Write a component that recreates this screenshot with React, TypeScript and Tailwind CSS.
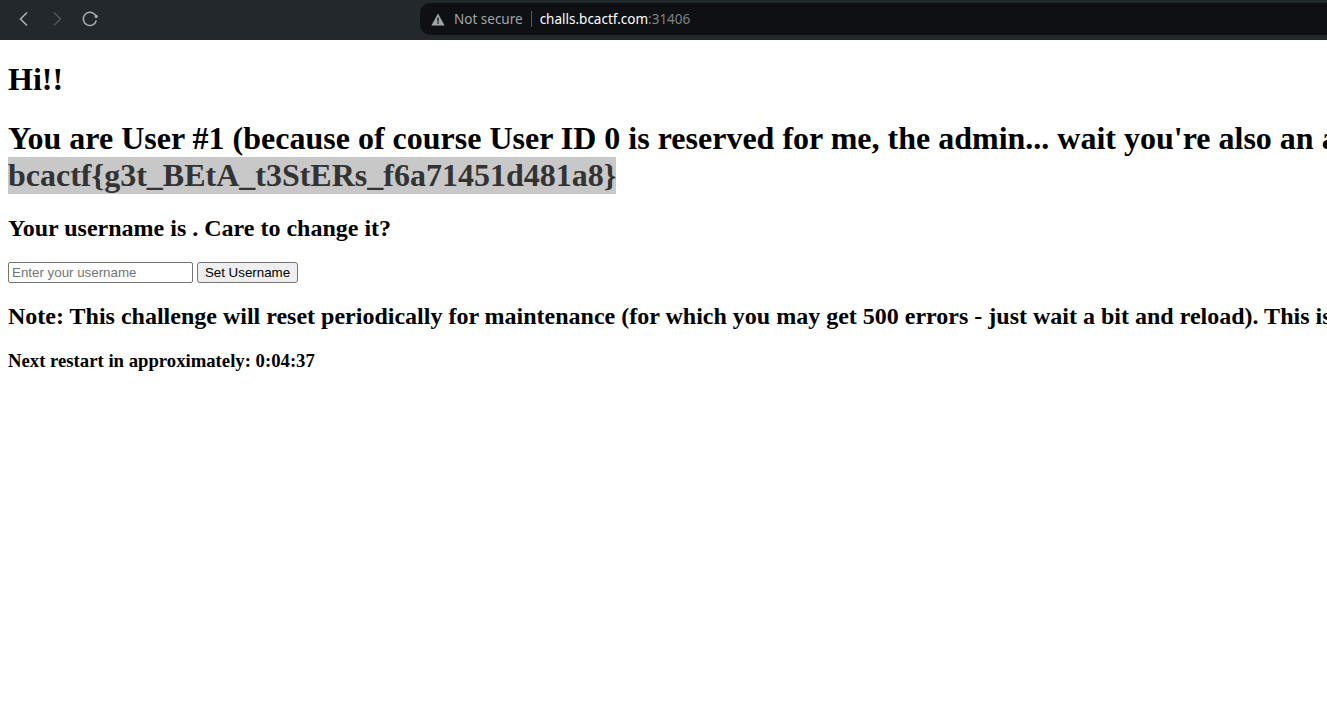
const App = () => {
  return (
    <div className="flex h-[724px] w-[1327px] flex-col overflow-hidden bg-white text-black [font-family:'Liberation_Serif',serif]">
      {/* Browser toolbar */}
      <div className="flex h-[40px] shrink-0 items-start bg-[#22282c]">
        <div className="flex h-[38px] w-[420px] shrink-0 items-center">
          <svg width="12" height="16" viewBox="0 0 12 16" fill="none" stroke="#a5b1b7" strokeWidth="1.6" className="ml-[18px]">
            <path d="M9 1.5 2.5 8 9 14.5" />
          </svg>
          <svg width="12" height="16" viewBox="0 0 12 16" fill="none" stroke="#4d565b" strokeWidth="1.6" className="ml-[21px]">
            <path d="M3 1.5 9.5 8 3 14.5" />
          </svg>
          <svg width="18" height="18" viewBox="0 0 18 18" fill="none" stroke="#a5b1b7" strokeWidth="1.5" className="ml-[18px]">
            <path d="M15.3 10.5A6.6 6.6 0 1 1 13.6 4.2L15 6" />
            <circle cx="15.2" cy="6.4" r="1.6" fill="#a5b1b7" stroke="none" />
          </svg>
        </div>
        <div className="mt-[3px] flex h-[32px] flex-1 items-center rounded-l-[10px] bg-[#0e1014] pl-[11px] text-[13.5px] [font-family:'Noto_Sans',sans-serif]">
          <svg width="14" height="13" viewBox="0 0 14 13">
            <path d="M7 .5 13.6 12.4H.4z" fill="#a0a5aa" />
            <path d="M6.3 4.5h1.4v4H6.3zM6.3 9.3h1.4v1.4H6.3z" fill="#0e1014" />
          </svg>
          <span className="ml-[9px] text-[#a0a5aa]">Not secure</span>
          <span className="ml-[8px] h-[16px] w-px bg-[#565b60]" />
          <span className="ml-[8px] text-white">challs.bcactf.com</span>
          <span className="text-[#7d8287]">:31406</span>
        </div>
      </div>

      {/* Page */}
      <div className="whitespace-nowrap px-2">
        <h1 className="mt-[21px] text-[32px] leading-[37px] font-bold">Hi!!</h1>
        <h1 className="mt-[22px] text-[32px] leading-[37px] font-bold">
          You are User #1 (because of course User ID 0 is reserved for me, the admin... wait you're also an admin?)
        </h1>
        <h1 className="text-[32px] leading-[37px] font-bold text-[#333333]">
          <span className="inline-block h-[37px] bg-[#c8c8c8]">bcactf{"{"}g3t_BEtA_t3StERs_f6a71451d481a8{"}"}</span>
        </h1>
        <h2 className="mt-[21px] text-[24px] leading-[27px] font-bold">Your username is . Care to change it?</h2>
        <form className="mt-[20px] flex h-[21px] items-center gap-[4px] [font-family:'Liberation_Sans',sans-serif]">
          <input
            type="text"
            placeholder="Enter your username"
            className="h-[21px] w-[185px] rounded-[2px] border border-[#767676] bg-white px-[3px] text-[13.33px] placeholder:text-[#757575]"
          />
          <button
            type="button"
            className="h-[21px] w-[101px] rounded-[3px] border border-[#767676] bg-[#efefef] text-[13.33px] text-black"
          >
            Set Username
          </button>
        </form>
        <h2 className="mt-[20px] text-[24px] leading-[27px] font-bold">
          Note: This challenge will reset periodically for maintenance (for which you may get 500 errors - just wait a bit and reload). This is to keep the instance clean.
        </h2>
        <h3 className="mt-[20px] text-[18.72px] leading-[21px] font-bold">Next restart in approximately: 0:04:37</h3>
      </div>
    </div>
  );
};

export default App;
